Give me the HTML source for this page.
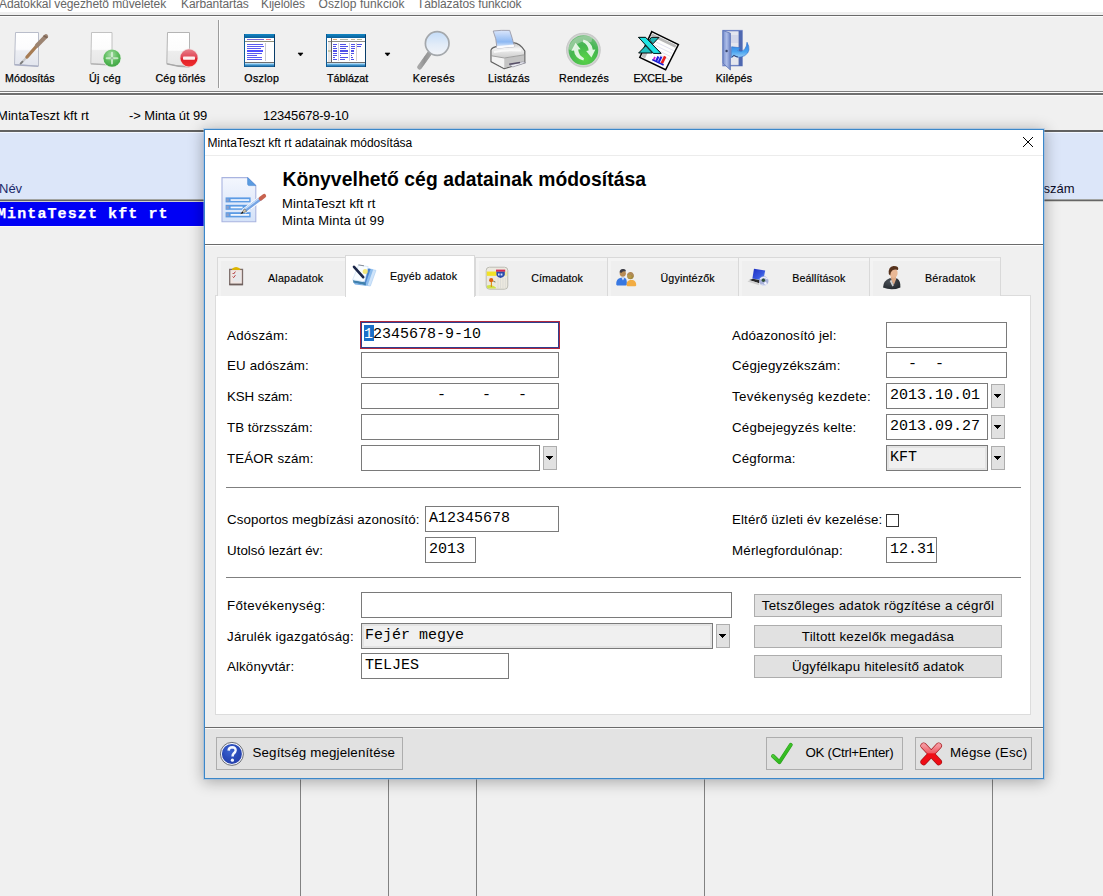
<!DOCTYPE html>
<html lang="hu">
<head>
<meta charset="utf-8">
<title>MintaTeszt kft rt adatainak módosítása</title>
<style>
*{box-sizing:border-box;margin:0;padding:0}
html,body{width:1103px;height:896px;overflow:hidden;background:#f0f0f0}
body{position:relative;font-family:"Liberation Sans",sans-serif;color:#000}
.abs{position:absolute}
.t{position:absolute;white-space:pre;line-height:1}
/* menu */
#menu{left:0;top:0;width:1103px;height:12px;background:#fff;overflow:hidden}
#menu .t{font-size:12px;color:#666;top:-2.5px;letter-spacing:-.08px}
/* toolbar */
.tl{font-size:10.67px;top:73px;color:#000;text-align:center;-webkit-text-stroke:.25px #000}
/* grid */
#ghead{left:0;top:130px;width:1103px;height:72px;background:#dce6f9;border-top:2px solid #626262;box-shadow:inset 0 1px 0 #f4f8ff}
#grow{left:0;top:202px;width:300px;height:24px;background:#0000f5;overflow:hidden}
#grow .t{font-family:"Liberation Mono",monospace;font-weight:bold;font-size:15px;color:#fff;left:-3px;top:4.5px;letter-spacing:1.1px;-webkit-text-stroke:.25px #fff}
.vl{position:absolute;top:225px;width:1px;height:671px;background:#828282}
/* dialog */
#dlg{left:204px;top:129px;width:840px;height:650px;background:#f0f0f0;border:1px solid #3b87c9;box-shadow:0 0 0 1px rgba(140,185,230,.45),0 2px 14px 1px rgba(0,0,0,.30)}
#dlg .in{position:absolute;left:-205px;top:-130px;width:1103px;height:896px}
#title{left:205px;top:130px;width:838px;height:25px;background:#fff}
#hdr{left:205px;top:155px;width:838px;height:89px;background:#fff;border-top:1px solid #ececec}
.lab{font-size:13.33px}
.inp{position:absolute;background:#fff;border:1px solid #7a7a7a;height:26px}
.inp .t,.mono{font-family:"Liberation Mono",monospace;font-size:15px}
.inp .t{left:3px;top:4px}
.gray{background:#f0f0f0;box-shadow:inset 0 0 0 2px #e3e3e3}
.dd{position:absolute;width:14px;height:24px;background:#e1e1e1;border:1px solid #adadad}
.dd:after{content:"";position:absolute;left:2px;top:9px;width:1px;height:1px;background:#000;box-shadow:1px 0px 0 0 #000,2px 0px 0 0 #000,3px 0px 0 0 #000,4px 0px 0 0 #000,5px 0px 0 0 #000,6px 0px 0 0 #000,1px 1px 0 0 #000,2px 1px 0 0 #000,3px 1px 0 0 #000,4px 1px 0 0 #000,5px 1px 0 0 #000,2px 2px 0 0 #000,3px 2px 0 0 #000,4px 2px 0 0 #000,3px 3px 0 0 #000}
.btn{position:absolute;background:#e1e1e1;border:1px solid #adadad;font-size:13.33px;text-align:center;white-space:pre}
.tab{position:absolute;top:257px;height:39px;border:1px solid #d9d9d9;border-bottom:none;background:#efefef;box-shadow:inset 0 3px 0 #f4f4f4,inset 3px 0 0 #f3f3f3}
.tabt{font-size:10.67px;-webkit-text-stroke:.15px #000}
</style>
</head>
<body>
<!-- MENU -->
<div id="menu" class="abs">
<span class="t" style="left:-1px">Adatokkal végezhető műveletek</span>
<span class="t" style="left:181px">Karbantartás</span>
<span class="t" style="left:261px">Kijelölés</span>
<span class="t" style="left:318.5px;letter-spacing:.1px">Oszlop funkciók</span>
<span class="t" style="left:417px">Táblázatos funkciók</span>
</div>
<!-- TOOLBAR frame -->
<div class="abs" style="left:0;top:15px;width:1103px;height:1px;background:#6a6a6a"></div>
<div class="abs" style="left:0;top:16px;width:1103px;height:1px;background:#fdfdfd"></div>
<div class="abs" style="left:0;top:91px;width:1103px;height:1px;background:#808080"></div>
<div class="abs" style="left:0;top:92px;width:1103px;height:1px;background:#fdfdfd"></div>
<div class="abs" style="left:0;top:93px;width:1103px;height:2px;background:#707070"></div>
<div class="abs" style="left:0;top:95px;width:1103px;height:1px;background:#fdfdfd"></div>
<div class="abs" style="left:218px;top:20px;width:1px;height:68px;background:#9c9c9c"></div>
<div class="abs" style="left:219px;top:20px;width:1px;height:68px;background:#fcfcfc"></div>
<!--TBI-START--><svg class="abs" style="left:0;top:17px" width="1103" height="74" viewBox="0 17 1103 74">
<defs>
<linearGradient id="pg" x1="0" y1="0" x2="0" y2="1"><stop offset="0" stop-color="#ffffff"/><stop offset=".5" stop-color="#fbfbfd"/><stop offset=".55" stop-color="#eceef3"/><stop offset="1" stop-color="#e2e5ee"/></linearGradient>
<linearGradient id="pg2" x1="0" y1="0" x2="0" y2="1"><stop offset="0" stop-color="#ffffff"/><stop offset=".52" stop-color="#fcfcfc"/><stop offset=".56" stop-color="#ededed"/><stop offset="1" stop-color="#e6e6e6"/></linearGradient>
<radialGradient id="gr" cx=".45" cy=".3" r=".8"><stop offset="0" stop-color="#a6dca6"/><stop offset=".5" stop-color="#5cbc5c"/><stop offset="1" stop-color="#379e3c"/></radialGradient>
<linearGradient id="rd" x1="0" y1="0" x2="0" y2="1"><stop offset="0" stop-color="#e8808a"/><stop offset=".5" stop-color="#e04050"/><stop offset=".55" stop-color="#e02028"/><stop offset="1" stop-color="#f03030"/></linearGradient>
<linearGradient id="wt" x1="0" y1="0" x2="0" y2="1"><stop offset="0" stop-color="#1387c4"/><stop offset="1" stop-color="#0a5f9a"/></linearGradient>
<linearGradient id="wb" x1="0" y1="0" x2="0" y2="1"><stop offset="0" stop-color="#d8f0ff"/><stop offset=".45" stop-color="#4aa0d8"/><stop offset="1" stop-color="#0a4f86"/></linearGradient>
<linearGradient id="ln" x1="0" y1="0" x2="0" y2="1"><stop offset="0" stop-color="#c4dcf8"/><stop offset=".55" stop-color="#e2ecf8"/><stop offset="1" stop-color="#f2f4f8"/></linearGradient>
<linearGradient id="hd" x1="0" y1="0" x2="1" y2="0"><stop offset="0" stop-color="#b8b8b8"/><stop offset=".5" stop-color="#8c8c8c"/><stop offset="1" stop-color="#a4a4a4"/></linearGradient>
<linearGradient id="pp" x1="0" y1="0" x2="0" y2="1"><stop offset="0" stop-color="#dbe6fb"/><stop offset=".65" stop-color="#8db8f2"/><stop offset=".85" stop-color="#c8dcf8"/><stop offset="1" stop-color="#ffffff"/></linearGradient>
<linearGradient id="pb" x1="0" y1="0" x2="0" y2="1"><stop offset="0" stop-color="#c8c8c8"/><stop offset=".35" stop-color="#f2f2f2"/><stop offset="1" stop-color="#cfcfcf"/></linearGradient>
<linearGradient id="pb2" x1="0" y1="0" x2="1" y2="0"><stop offset="0" stop-color="#f4f4f4"/><stop offset=".6" stop-color="#e0e0e0"/><stop offset="1" stop-color="#c4c4c4"/></linearGradient>
<radialGradient id="rf" cx=".55" cy=".8" r=".95"><stop offset="0" stop-color="#5ad446"/><stop offset=".5" stop-color="#44b650"/><stop offset="1" stop-color="#86c490"/></radialGradient>
<linearGradient id="dr" x1="0" y1="0" x2="1" y2="0"><stop offset="0" stop-color="#7a90ce"/><stop offset=".5" stop-color="#adbde8"/><stop offset="1" stop-color="#6c82c4"/></linearGradient>
<linearGradient id="ar" x1="0" y1="0" x2="0" y2="1"><stop offset="0" stop-color="#2a7be0"/><stop offset=".6" stop-color="#4aa4f0"/><stop offset="1" stop-color="#9cd0f8"/></linearGradient>
<filter id="b3" x="-40%" y="-40%" width="180%" height="180%"><feGaussianBlur stdDeviation=".35"/></filter>
<filter id="b5" x="-40%" y="-40%" width="180%" height="180%"><feGaussianBlur stdDeviation=".55"/></filter>
</defs>
<!-- 1 Módosítás -->
<g filter="url(#b3)">
<path d="M15.5 32.5H38.5V66L14.5 64.5Z" fill="url(#pg)" stroke="#b9bdca" stroke-width="1"/>
<path d="M14.5 64.8L38.3 66.4" stroke="#a9aec4" stroke-width="1.4" fill="none"/>
<path d="M21 63.2L27 57" stroke="#c9c9c9" stroke-width="2.2" stroke-linecap="round"/>
<path d="M20.6 63.6L22.5 61.6" stroke="#7c7c7c" stroke-width="1.8" stroke-linecap="round"/>
<path d="M27 57L37.5 45" stroke="#a67c55" stroke-width="3.4" stroke-linecap="round"/>
<path d="M37 45.5L46 36.2" stroke="#9c8472" stroke-width="4.2" stroke-linecap="round"/>
<path d="M44 36L47 37.5" stroke="#7d6555" stroke-width="1.6" stroke-linecap="round"/>
</g>
<!-- 2 Új cég -->
<g filter="url(#b3)">
<path d="M91.5 32.5H112V64.8L90.8 63.6Z" fill="url(#pg2)" stroke="#c2c2c2" stroke-width="1"/>
<path d="M90.8 63.9L112 65.2" stroke="#b0b0b0" stroke-width="1.3"/>
<circle cx="112" cy="58.2" r="9.3" fill="#e4efe4" opacity=".9"/>
<circle cx="112" cy="58.2" r="8.6" fill="url(#gr)"/>
<path d="M112 52.8V63.6M106.6 58.2H117.4" stroke="#dff5df" stroke-width="2" stroke-linecap="round" opacity=".75"/>
<circle cx="112" cy="58.2" r="1.3" fill="#9cc0a0"/>
</g>
<!-- 3 Cég törlés -->
<g filter="url(#b3)">
<path d="M167.5 32.5H189.5V66.5Q178 66.8 166.8 63.6Z" fill="url(#pg2)" stroke="#b4b4b4" stroke-width="1"/>
<path d="M166.8 63.9Q178 67 189.5 66.8" stroke="#a8a8a8" stroke-width="1.3" fill="none"/>
<circle cx="189" cy="57.9" r="9.4" fill="#f0dada" opacity=".9"/>
<circle cx="189" cy="57.9" r="8.6" fill="url(#rd)"/>
<rect x="183" y="56.4" width="12" height="3.4" rx=".8" fill="#fdeeee"/>
</g>
<!-- 4 Oszlop -->
<g shape-rendering="crispEdges">
<rect x="244" y="34" width="31" height="33" fill="#0d5c96"/>
<rect x="245" y="34" width="29" height="4" fill="url(#wt)"/>
<rect x="245" y="38" width="29" height="25" fill="#fff"/>
<rect x="245" y="63" width="29" height="4" fill="url(#wb)"/>
<rect x="274" y="35" width="1" height="32" fill="#083d6a"/>
<rect x="245" y="41" width="29" height="1" fill="#8e8e78"/>
<rect x="245" y="62" width="29" height="1" fill="#6e6e6e"/>
<rect x="247" y="39" width="17" height="1" fill="#7a6ad8"/>
<rect x="266" y="39" width="5" height="1" fill="#f07a88"/>
<rect x="265" y="43" width="1" height="18" fill="#c8c8d0"/>
<g fill="#5a5af0">
<rect x="247" y="44" width="16" height="1"/><rect x="247" y="46" width="17" height="1"/><rect x="247" y="48" width="14" height="1"/>
<rect x="247" y="50" width="16" height="2" fill="#5050ff"/>
<rect x="247" y="53" width="15" height="1"/><rect x="247" y="55" width="10" height="1"/><rect x="247" y="57" width="15" height="1"/><rect x="247" y="59" width="15" height="1"/>
</g>
</g>
<path d="M298 53h5l-2.5 3z" fill="#000" stroke="#000" stroke-width=".6"/>
<!-- 5 Táblázat -->
<g shape-rendering="crispEdges">
<rect x="326" y="34" width="40" height="33" fill="#0d5c96"/>
<rect x="327" y="34" width="38" height="4" fill="url(#wt)"/>
<rect x="327" y="38" width="38" height="25" fill="#fff"/>
<rect x="327" y="63" width="38" height="4" fill="url(#wb)"/>
<rect x="365" y="35" width="1" height="32" fill="#083d6a"/>
<rect x="328" y="41" width="37" height="1" fill="#8e8e88"/>
<rect x="327" y="62" width="38" height="1" fill="#6e6e6e"/>
<rect x="331" y="38" width="1" height="24" fill="#606060"/>
<rect x="328" y="42" width="3" height="20" fill="#e8e8e8"/>
<rect x="328" y="50" width="3" height="2" fill="#c8c8a8"/>
<rect x="333" y="39" width="4" height="1" fill="#d8a878"/><rect x="340" y="39" width="8" height="1" fill="#b8b8a8"/><rect x="351" y="39" width="4" height="1" fill="#c8b898"/><rect x="357" y="39" width="5" height="1" fill="#b8b898"/>
<rect x="338" y="43" width="1" height="18" fill="#d0d0e0"/><rect x="349" y="43" width="1" height="18" fill="#d0d0e0"/><rect x="356" y="43" width="1" height="18" fill="#d8d0d0"/>
<g fill="#5050e8">
<rect x="333" y="44" width="4" height="1"/><rect x="340" y="44" width="6" height="1"/><rect x="351" y="44" width="4" height="1"/><rect x="357" y="44" width="5" height="1"/>
<rect x="333" y="46" width="3" height="1"/><rect x="340" y="46" width="8" height="1"/><rect x="351" y="46" width="4" height="1"/><rect x="357" y="46" width="4" height="1"/>
<rect x="333" y="48" width="4" height="1"/><rect x="340" y="48" width="6" height="1"/><rect x="351" y="48" width="4" height="1"/>
<rect x="333" y="50" width="4" height="2"/><rect x="340" y="50" width="8" height="2"/><rect x="351" y="50" width="3" height="2"/>
<rect x="333" y="53" width="4" height="1"/><rect x="340" y="53" width="8" height="1"/><rect x="351" y="53" width="3" height="1"/>
<rect x="333" y="55" width="4" height="1"/><rect x="340" y="55" width="1" height="1"/><rect x="351" y="55" width="1" height="1"/>
<rect x="333" y="57" width="2" height="1"/><rect x="340" y="57" width="8" height="1"/><rect x="351" y="57" width="2" height="1"/>
<rect x="333" y="59" width="4" height="1"/><rect x="340" y="59" width="5" height="1"/><rect x="351" y="59" width="3" height="1"/>
</g>
</g>
<path d="M385 53h5l-2.5 3z" fill="#000" stroke="#000" stroke-width=".6"/>
<!-- 6 Keresés -->
<g filter="url(#b3)">
<path d="M429.3 53.6L419.6 67.2" stroke="url(#hd)" stroke-width="4.6" stroke-linecap="round"/>
<path d="M429.3 53.6L419.6 67.2" stroke="#9a9a9a" stroke-width="4.6" stroke-linecap="round" opacity=".55"/>
<circle cx="437.2" cy="43.5" r="11.8" fill="url(#ln)" stroke="#a4a8ac" stroke-width="1.7"/>
</g>
<!-- 7 Listázás -->
<g filter="url(#b3)">
<path d="M491 50.2Q491.2 48 496 46.6L513 42.6Q520.4 43.4 524.8 51V62.6L504.2 68.7L491 61.6Z" fill="#d9d9d9" stroke="#646464" stroke-width="1.25" stroke-linejoin="round"/>
<path d="M491.8 50.4Q492 48.6 496.4 47.4L513 43.6Q519.6 44.2 524 51.4V54.6L504.4 57.6L491.8 55.6Z" fill="url(#pb)"/>
<path d="M491.8 56L504.4 58.2V68L491.8 61.2Z" fill="#f3f3f3"/>
<path d="M504.4 58.2L524.2 55V62.2L504.4 68Z" fill="#c4c4c4"/>
<path d="M491.6 55.8L504.4 58L524.4 54.8" stroke="#9a9a9a" stroke-width=".9" fill="none"/>
<path d="M494 52Q505 49.4 521 50.6" stroke="#fbfbfb" stroke-width="2" fill="none" opacity=".9"/>
<path d="M493.2 31Q501 30 509.7 30.4Q512.4 38 514.4 46.6L497 48.2Q496.4 38 493.2 31Z" fill="url(#pp)" stroke="#9a9aa8" stroke-width=".9"/>
<path d="M496.6 46.2L514.2 44.6L514.6 46.8L497 48.6Z" fill="#fbfbfd"/>
<path d="M509.6 65L522.8 61.8L525.8 62.8L512.8 67Z" fill="#ececf2" stroke="#8c8c9a" stroke-width=".6"/>
<path d="M509.2 64.2L520 62.6" stroke="#585068" stroke-width="1.5"/>
</g>
<!-- 8 Rendezés -->
<g filter="url(#b5)">
<circle cx="583.4" cy="50.1" r="16.8" fill="#d4d6d4" stroke="#c9cac9" stroke-width="1.2"/>
<circle cx="583.4" cy="50.1" r="14.9" fill="url(#rf)"/>
<path d="M570.6 50Q575 35.6 592 39.6" stroke="#b4d4b8" stroke-width="5.5" fill="none" opacity=".6"/>
<path d="M575.6 42.8L580.6 49.2L578.2 49.6Q578.6 55.6 584 58.2L583.4 60.6Q574.6 58 574 50.4L571.4 50.8Z" fill="#eef8ee" opacity=".92"/>
<path d="M591.4 57.4L586.2 51L588.6 50.6Q588.2 44.6 582.8 42L583.4 39.6Q592.2 42.2 592.8 49.8L595.4 49.4Z" fill="#eef8ee" opacity=".92"/>
</g>
<!-- 9 EXCEL-be -->
<g>
<path d="M651.8 31.6L678.4 44.6L665.6 69.8L639.8 57.4Z" fill="#fdfdfd" stroke="#000" stroke-width="1.5" stroke-linejoin="miter"/>
<path d="M652.2 33.4L676.6 45.2L675.2 47.8L650.8 36Z" fill="#b8b8b8"/>
<path d="M650.6 36.6L644 50L641.4 56.6L645 58.4L654 39Z" fill="#c0c0c0"/>
<g stroke="#d4d4e8" stroke-width=".7"><path d="M655 41.5L673.5 50.5"/><path d="M653.5 44.5L672 53.5"/><path d="M652 47.5L670.5 56.5"/><path d="M650.5 50.5L669 59.5"/></g>
<path d="M654.2 56.4l1.6.8-1.4 3-1.6-.8z" fill="#d020d0"/>
<path d="M657.4 56l2 .9-2.2 4.6-2-.9z" fill="#2020e0"/>
<path d="M660.4 56.2l2 .9-2.6 5.4-2-.9z" fill="#2020e0"/>
<path d="M664 55.8l2.4 1.1-3.4 7-2.4-1.1z" fill="#e82020"/>
<path d="M652.2 59.6L663.6 65" stroke="#1818d0" stroke-width="1.5"/>
<path d="M638.6 37.4H645.6L661 53.4H653.6Z" fill="#20e4e4" stroke="#000" stroke-width="1"/>
<path d="M651.4 37.4H659L653 43.8L649.4 40Z" fill="#22b4b4" stroke="#000" stroke-width=".9"/>
<path d="M638.6 53H652.4L647.4 47.6L645.6 45.8Z" fill="#20c0c0" stroke="#000" stroke-width=".9"/>
<path d="M638.6 37.4H645.6L661 53.4H653.6Z" fill="#20e4e4" stroke="#000" stroke-width=".7"/>
</g>
<!-- 10 Kilépés -->
<g filter="url(#b5)">
<rect x="723" y="30.6" width="19" height="35" fill="#e4e6ee" stroke="#7084c4" stroke-width="1.4"/>
<rect x="730" y="35" width="8.5" height="8" fill="#d4d8ea"/>
<rect x="738.6" y="31" width="3.6" height="35" fill="#5068b0"/>
<path d="M723 30.6L730.4 33.2V70L723 63.2Z" fill="url(#dr)" stroke="#5c74b8" stroke-width=".8"/>
<circle cx="726.6" cy="51" r="1.2" fill="#39456c"/>
<path d="M747 42.2Q752 51 744.8 55.6Q738.4 59 733.6 55.4L731.4 57.8L731.6 46.8L740.6 47.8L737.8 50.6Q741.6 52.6 744.6 49.4Q747 46 747 42.2Z" fill="url(#ar)" stroke="#2c6cc8" stroke-width=".6"/><path d="M732 57.2L734 55.4Q736 56.8 738 57" stroke="#26386c" stroke-width="1.1" fill="none" opacity=".8"/>
</g>
</svg>
<!--TBI-END-->
<!-- toolbar labels -->
<span class="t tl" style="left:5px;letter-spacing:0.06px">Módosítás</span>
<span class="t tl" style="left:89px;letter-spacing:0.3px">Új cég</span>
<span class="t tl" style="left:155.5px;letter-spacing:0.15px">Cég törlés</span>
<span class="t tl" style="left:244.3px;letter-spacing:0.3px">Oszlop</span>
<span class="t tl" style="left:327px;letter-spacing:0.05px">Táblázat</span>
<span class="t tl" style="left:412.8px;letter-spacing:0.45px">Keresés</span>
<span class="t tl" style="left:488px;letter-spacing:0.35px">Listázás</span>
<span class="t tl" style="left:559px;letter-spacing:0.26px">Rendezés</span>
<span class="t tl" style="left:633.4px;letter-spacing:-0.18px">EXCEL-be</span>
<span class="t tl" style="left:715.8px;letter-spacing:0.22px">Kilépés</span>
<!-- info line -->
<span class="t" style="left:-3px;top:109px;font-size:13px;letter-spacing:.06px">MintaTeszt kft rt</span>
<span class="t" style="left:129px;top:109px;font-size:13px;letter-spacing:-.12px">-&gt; Minta út 99</span>
<span class="t" style="left:263px;top:109px;font-size:13px;letter-spacing:-.2px">12345678-9-10</span>
<!-- GRID -->
<div id="ghead" class="abs"></div>
<div class="abs" style="left:0;top:199px;width:1103px;height:1px;background:#a2a4a2"></div>
<div class="abs" style="left:0;top:200px;width:1103px;height:1px;background:#666"></div>
<div class="abs" style="left:0;top:201px;width:1103px;height:1px;background:#cfcfcc"></div>
<span class="t" style="left:-1px;top:182px;font-size:13px;color:#1b2a6b">Név</span>
<span class="t" style="left:1043.5px;top:182px;font-size:13px;color:#0c0c28">szám</span>
<div id="grow" class="abs"><span class="t">MintaTeszt kft rt</span></div>
<div class="abs" style="left:0;top:226px;width:300px;height:1px;background:#fafafa"></div>
<div class="vl" style="left:300px"></div>
<div class="vl" style="left:388px"></div>
<div class="vl" style="left:476px"></div>
<div class="vl" style="left:704px"></div>
<div class="vl" style="left:992px"></div>
<!-- DIALOG -->
<div id="dlg" class="abs"></div>
<div id="title" class="abs"></div>
<span class="t" style="left:207.5px;top:137px;font-size:12px">MintaTeszt kft rt adatainak módosítása</span>
<svg class="abs" style="left:1022px;top:136px" width="12" height="12" viewBox="0 0 12 12"><path d="M1 1L11 11M11 1L1 11" stroke="#000" stroke-width="1" fill="none"/></svg>
<div id="hdr" class="abs"></div>
<div class="abs" style="left:205px;top:244px;width:838px;height:1px;background:#6b6b6b"></div>
<div class="abs" style="left:205px;top:245px;width:838px;height:1px;background:#fff"></div>
<span class="t" style="left:282.4px;top:170px;font-size:19.3px;font-weight:bold;letter-spacing:.07px">Könyvelhető cég adatainak módosítása</span>
<span class="t" style="left:282px;top:197px;font-size:13px;letter-spacing:.15px">MintaTeszt kft rt</span>
<span class="t" style="left:282px;top:214px;font-size:13px;letter-spacing:.15px">Minta Minta út 99</span>


<!-- white panel -->
<div class="abs" style="left:215px;top:295px;width:816px;height:420px;background:#fff;border:1px solid #dcdcdc"></div>
<!-- tabs -->
<div class="tab" style="left:217px;width:129px"></div>
<div class="tab" style="left:475px;width:133px"></div>
<div class="tab" style="left:607px;width:132px"></div>
<div class="tab" style="left:738px;width:132px"></div>
<div class="tab" style="left:869px;width:132px"></div>
<div class="tab" style="left:345px;top:255px;width:130px;height:42px;background:#fff;box-shadow:none"></div>
<span class="t tabt" style="left:268px;top:273px;letter-spacing:.2px">Alapadatok</span>
<span class="t tabt" style="left:390px;top:271px;letter-spacing:.17px">Egyéb adatok</span>
<span class="t tabt" style="left:531.3px;top:273px">Címadatok</span>
<span class="t tabt" style="left:660.5px;top:273px;letter-spacing:.15px">Ügyintézők</span>
<span class="t tabt" style="left:792.3px;top:273px;letter-spacing:.08px">Beállítások</span>
<span class="t tabt" style="left:925px;top:273px;letter-spacing:.22px">Béradatok</span>


<!-- form -->
<span class="t lab" style="left:227px;top:329px;letter-spacing:0.250px">Adószám:</span>
<span class="t lab" style="left:227px;top:359px;letter-spacing:0.182px">EU adószám:</span>
<span class="t lab" style="left:227px;top:390px;letter-spacing:-0.111px">KSH szám:</span>
<span class="t lab" style="left:227px;top:421px;letter-spacing:0.038px">TB törzsszám:</span>
<span class="t lab" style="left:227px;top:452px;letter-spacing:0.127px">TEÁOR szám:</span>
<span class="t lab" style="left:732px;top:329px;letter-spacing:0.135px">Adóazonosító jel:</span>
<span class="t lab" style="left:732px;top:359px;letter-spacing:0.227px">Cégjegyzékszám:</span>
<span class="t lab" style="left:732px;top:390px;letter-spacing:0.365px">Tevékenység kezdete:</span>
<span class="t lab" style="left:732px;top:421px;letter-spacing:0.237px">Cégbejegyzés kelte:</span>
<span class="t lab" style="left:732px;top:452px;letter-spacing:0.156px">Cégforma:</span>
<div class="inp" style="left:360px;top:321px;width:200px;height:28px;border:1px solid #b0283c"><div class="abs" style="left:0;top:0;right:0;bottom:0;border:1px solid #2f3f8f"></div><div class="abs" style="left:3px;top:3px;width:10px;height:16px;background:#1a6fc9"></div><span class="t" style="left:3px;top:5px"><span style="color:#fff">1</span>2345678-9-10</span></div>
<div class="inp " style="left:361px;top:352px;width:198px;height:26px"><span class="t"></span></div>
<div class="inp " style="left:361px;top:383px;width:198px;height:26px"><span class="t">        -    -   -</span></div>
<div class="inp " style="left:361px;top:414px;width:198px;height:26px"><span class="t"></span></div>
<div class="inp " style="left:361px;top:445px;width:179px;height:26px"><span class="t"></span></div>
<div class="dd" style="left:543px;top:446px"></div>
<div class="inp " style="left:886px;top:322px;width:121px;height:26px"><span class="t"></span></div>
<div class="inp " style="left:886px;top:352px;width:121px;height:26px"><span class="t">  -  -</span></div>
<div class="inp " style="left:886px;top:383px;width:102px;height:26px"><span class="t">2013.10.01</span></div>
<div class="dd" style="left:991px;top:384px"></div>
<div class="inp " style="left:886px;top:414px;width:102px;height:26px"><span class="t">2013.09.27</span></div>
<div class="dd" style="left:991px;top:415px"></div>
<div class="inp gray" style="left:886px;top:445px;width:102px;height:26px"><span class="t">KFT</span></div>
<div class="dd" style="left:991px;top:446px"></div>
<div class="abs" style="left:226px;top:487px;width:795px;height:1px;background:#7f7f7f"></div>
<span class="t lab" style="left:227px;top:513px;letter-spacing:0.067px">Csoportos megbízási azonosító:</span>
<span class="t lab" style="left:227px;top:544px;letter-spacing:0.029px">Utolsó lezárt év:</span>
<div class="inp " style="left:425px;top:506px;width:134px;height:26px"><span class="t">A12345678</span></div>
<div class="inp " style="left:425px;top:537px;width:51px;height:26px"><span class="t">2013</span></div>
<span class="t lab" style="left:732px;top:513px;letter-spacing:0.108px">Eltérő üzleti év kezelése:</span>
<span class="t lab" style="left:732px;top:544px;letter-spacing:0.200px">Mérlegfordulónap:</span>
<div class="abs" style="left:886px;top:514px;width:13px;height:13px;background:#fff;border:1px solid #333"></div>
<div class="inp " style="left:886px;top:537px;width:51px;height:26px"><span class="t">12.31</span></div>
<div class="abs" style="left:226px;top:577px;width:795px;height:1px;background:#7f7f7f"></div>
<span class="t lab" style="left:227px;top:599px;letter-spacing:0.321px">Főtevékenység:</span>
<span class="t lab" style="left:227px;top:630px;letter-spacing:0.230px">Járulék igazgatóság:</span>
<span class="t lab" style="left:227px;top:660px;letter-spacing:0.118px">Alkönyvtár:</span>
<div class="inp " style="left:361px;top:592px;width:371px;height:26px"><span class="t"></span></div>
<div class="inp gray" style="left:361px;top:623px;width:352px;height:26px"><span class="t">Fejér megye</span></div>
<div class="dd" style="left:716px;top:624px"></div>
<div class="inp " style="left:361px;top:653px;width:148px;height:26px"><span class="t">TELJES</span></div>
<div class="btn" style="left:754px;top:594px;width:248px;height:23px;line-height:21px;letter-spacing:0.232px">Tetszőleges adatok rögzítése a cégről</div>
<div class="btn" style="left:754px;top:625px;width:248px;height:23px;line-height:21px;letter-spacing:0.229px">Tiltott kezelők megadása</div>
<div class="btn" style="left:754px;top:655px;width:248px;height:23px;line-height:21px;letter-spacing:0.168px">Ügyfélkapu hitelesítő adatok</div>

<!-- footer -->
<div class="abs" style="left:205px;top:727px;width:838px;height:1px;background:#6b6b6b"></div>
<div class="abs" style="left:205px;top:728px;width:838px;height:50px;background:#e3e3e3;border-top:1px solid #fafafa"></div>
<div class="btn" style="left:216px;top:737px;width:187px;height:33px"></div>
<span class="t lab" style="left:252.5px;top:746px;letter-spacing:.15px">Segítség megjelenítése</span>
<div class="btn" style="left:766px;top:737px;width:137px;height:33px"></div>
<span class="t lab" style="left:805.5px;top:746px;letter-spacing:-.29px">OK (Ctrl+Enter)</span>
<div class="btn" style="left:915px;top:737px;width:117px;height:33px"></div>
<span class="t lab" style="left:950px;top:746px;letter-spacing:.23px">Mégse (Esc)</span>
<!--DLI-START--><svg class="abs" style="left:205px;top:156px" width="838" height="622" viewBox="205 156 838 622">
<defs>
<linearGradient id="dpg" x1="0" y1="0" x2="0" y2="1"><stop offset="0" stop-color="#f4f7fe"/><stop offset=".45" stop-color="#e6edfb"/><stop offset="1" stop-color="#d4e2f8"/></linearGradient>
<linearGradient id="pnc" x1="0" y1="0" x2="1" y2="1"><stop offset="0" stop-color="#8fb8ec"/><stop offset="1" stop-color="#5e92dc"/></linearGradient>
<radialGradient id="hp" cx=".4" cy=".35" r=".8"><stop offset="0" stop-color="#3a62d0"/><stop offset=".6" stop-color="#2746b4"/><stop offset="1" stop-color="#2a3ea8"/></radialGradient>
<linearGradient id="ck" x1="0" y1="0" x2="1" y2="1"><stop offset="0" stop-color="#66d850"/><stop offset=".6" stop-color="#34bc22"/><stop offset="1" stop-color="#2ba51c"/></linearGradient>
<linearGradient id="rx" x1="0" y1="0" x2="0" y2="1"><stop offset="0" stop-color="#f4959c"/><stop offset=".42" stop-color="#f05a64"/><stop offset=".5" stop-color="#f01018"/><stop offset="1" stop-color="#ee0a12"/></linearGradient>
<linearGradient id="scr" x1="0" y1="0" x2="1" y2="1"><stop offset="0" stop-color="#2030c0"/><stop offset=".6" stop-color="#3858e0"/><stop offset="1" stop-color="#78a8f4"/></linearGradient>
<radialGradient id="su" cx=".4" cy=".3" r=".9"><stop offset="0" stop-color="#4a5058"/><stop offset="1" stop-color="#1c2024"/></radialGradient>
<filter id="c3" x="-40%" y="-40%" width="180%" height="180%"><feGaussianBlur stdDeviation=".35"/></filter>
<filter id="c5" x="-40%" y="-40%" width="180%" height="180%"><feGaussianBlur stdDeviation=".5"/></filter>
</defs>
<!-- header doc icon -->
<g filter="url(#c3)">
<path d="M222 177.6H247.6L255.8 185.6V221.8H222Z" fill="url(#dpg)" stroke="#a9b4e0" stroke-width="1.1"/>
<path d="M247.6 177.6L255.8 185.6H249Q247.6 185.4 247.6 184Z" fill="#5a9be0" stroke="#4c8ad4" stroke-width=".6"/>
<g fill="#5b9be4"><rect x="225.6" y="197.4" width="25" height="5"/><rect x="225.6" y="204.8" width="25" height="5"/><rect x="225.6" y="212.2" width="25" height="5.2"/></g>
<g fill="#f2f7fe"><rect x="230.6" y="199.2" width="18.6" height="1.7"/><rect x="230.6" y="206.6" width="12" height="1.7"/><rect x="230.6" y="214" width="18.6" height="1.8"/></g>
<g fill="#8f9fc8"><rect x="226.4" y="198.6" width="2.4" height="2.8"/><rect x="226.4" y="206" width="2.4" height="2.8"/><rect x="226.4" y="213.4" width="2.4" height="2.8"/></g>
<path d="M243.6 211.4L261.6 197.8" stroke="#ffffff" stroke-width="5.4" stroke-linecap="butt"/>
<path d="M243.8 211.2L261.4 198" stroke="url(#pnc)" stroke-width="3.6"/>
<path d="M244.6 209.2L262 196.2" stroke="#c8e0fa" stroke-width="1.1"/>
<path d="M260.6 198.6L264.2 195.9" stroke="#c86450" stroke-width="3.9" stroke-linecap="round"/>
<path d="M240.6 213.8L244.8 208.8L246.6 211.4Z" fill="#d8c8a8" stroke="#555" stroke-width=".5"/>
<path d="M240.6 213.8L242.6 211.6L243.2 213Z" fill="#111"/>
</g>
<!-- tab icon 1 clipboard -->
<g filter="url(#c3)">
<rect x="229.7" y="269.4" width="12.8" height="15.2" fill="#f1e6e2" stroke="#7d6d6a" stroke-width="1.3"/>
<rect x="229.4" y="283.6" width="13.4" height="1.6" fill="#6d5f5c"/>
<rect x="233.2" y="272" width="7.6" height="9.6" fill="#e4e8ee" opacity=".8"/>
<path d="M232 268.8Q236 265 240.2 268.8V270H232Z" fill="#dcb400"/>
<path d="M232.6 273l1 1 1.8-2.4M232.6 276.6l1 1 1.8-2.4" stroke="#b02a2a" stroke-width=".9" fill="none"/>
</g>
<!-- tab icon 2 notes -->
<g filter="url(#c3)">
<path d="M369 268.6L376 270.4L370.4 286L364.4 284.4Z" fill="#cfe4fa" stroke="#9cc4ee" stroke-width=".5"/>
<path d="M368 268.4L373.2 269.6L367.6 285.4L363.6 284Z" fill="#8cbcec"/>
<path d="M367.4 268.4L370.6 269L365.4 284.6L362.6 283.4Z" fill="#4a82cc"/>
<path d="M352.8 280L365 282.2L366.2 285.4L353.6 283Z" fill="#3f80ac"/>
<path d="M353.6 282.6L366 285.2L370 286.2L355 284.4Z" fill="#78aee6"/>
<path d="M358.6 265L368.2 266.6L364.6 281.8L352.6 279.8Z" fill="#f8fcff" stroke="#c4dcf4" stroke-width=".6"/>
<circle cx="365.2" cy="271.4" r="2.5" fill="#f2e46c" opacity=".9"/>
<path d="M354 266.8L363.2 277.2" stroke="#1a2848" stroke-width="2.6" stroke-linecap="round"/>
<path d="M358.4 264.9L364 265.8" stroke="#70747c" stroke-width=".8"/>
</g>
<!-- tab icon 3 map -->
<g filter="url(#c5)">
<rect x="486.2" y="267.2" width="21.6" height="22" rx="3.2" fill="#ece9df" stroke="#bdbdb4" stroke-width="1"/>
<rect x="486.8" y="271.6" width="20.4" height="4.2" fill="#efe58c" opacity=".75"/>
<rect x="486.8" y="271.6" width="9.6" height="4.2" fill="#f2e228"/>
<path d="M498 278V288.6M500.5 278V288.6M503 278V288.6M505.4 278V288.6" stroke="#d9d9d4" stroke-width=".7"/>
<rect x="496" y="269.6" width="9.2" height="2.2" fill="#d42c50"/>
<path d="M496.4 271.8H504.8V275Q503.6 277.6 500.6 278Q497.4 277.6 496.4 275Z" fill="#2c4cac"/>
<path d="M498 273.4h1.6v2.2H498zM500.6 273.4h1.8v2.2h-1.8z" fill="#d4e0ff"/>
<path d="M487 285.6Q492 283.6 496 287.6L495.6 288.6H488.6Q487 288.4 487 287Z" fill="#cfe248"/>
<circle cx="491.2" cy="280.2" r="2.1" fill="#e0600e"/>
<path d="M491.4 282V287" stroke="#d89018" stroke-width="1.1"/>
<path d="M493.4 281.4L495.4 282" stroke="#687858" stroke-width="1"/>
</g>
<!-- tab icon 4 users -->
<g filter="url(#c5)">
<path d="M616.2 284.6Q616 278.6 621 277.8H624.6Q627.2 278.4 626.8 285L625.8 285.6H617Z" fill="#3878e2"/>
<path d="M621.6 278l1.4 2.6 1.4-2.6z" fill="#cfdcf8"/>
<circle cx="622.8" cy="273.6" r="3.1" fill="#b88c54"/>
<path d="M619.6 272.6Q619.6 268.6 623.4 269Q626.2 269.4 625.8 271.6Q623 270.8 621.6 272.8Z" fill="#3c3c44"/>
<path d="M626.6 285.6Q626.2 280.8 630 280H633Q636.4 281 636.2 285.6L635.4 286.2H627.4Z" fill="#f2ac42"/>
<circle cx="630.4" cy="276" r="3.2" fill="#a48a3e"/>
<path d="M627 275.6Q627.4 271.6 631 272Q634.2 272.6 633.8 277.4Q632.4 274.6 629 274.4Z" fill="#b08a58"/>
<circle cx="629.6" cy="276.6" r="2" fill="#b89848"/>
</g>
<!-- tab icon 5 settings -->
<g filter="url(#c5)">
<path d="M754 268.8L765.2 270.6L763.2 280.4L752.4 278.6Z" fill="url(#scr)"/>
<path d="M749.2 280L753 278.8L760 280.2L759 283.2Z" fill="#2c2c2c"/>
<path d="M747.4 281.6L749.4 280.2L759.2 283.2L759 285.2Z" fill="#cfcfcf"/>
<circle cx="763.8" cy="281" r="4.7" fill="#aab2da"/>
<path d="M760 279Q763.8 275.6 767.6 279" stroke="#eef0fa" stroke-width="1.2" fill="none"/>
<path d="M761.4 284.6Q764 286.4 767 284.2" stroke="#e4e8f8" stroke-width="1" fill="none"/>
<circle cx="763.4" cy="280.2" r="1.7" fill="#2e5034"/>
<circle cx="765.4" cy="283.2" r="1.2" fill="#f4f6ff"/>
</g>
<!-- tab icon 6 person -->
<g filter="url(#c5)">
<path d="M883 287.6Q883.4 280.4 889.6 278.2L897.2 278.6Q900.8 281 900.4 287.4Q892 291.2 883 287.6Z" fill="url(#su)"/>
<path d="M890.6 276.4H896V279.6L893.8 285L891.6 280.6Z" fill="#dca884"/>
<path d="M891.4 279.8L893.8 285.6L892.4 286.6L889.8 281Z" fill="#f0f0f0" opacity=".8"/>
<ellipse cx="893.6" cy="273" rx="4" ry="5" fill="#e9b896"/>
<path d="M888.8 274Q888 266.4 893.6 266Q899.4 266.2 898 270Q895 268.6 892.2 270.6Q890.4 272 890.2 275.4Z" fill="#56301a"/>
</g>
<!-- footer help -->
<g filter="url(#c3)">
<circle cx="231.9" cy="753.9" r="11.5" fill="#f4f6fc" stroke="#5c6068" stroke-width=".9"/>
<circle cx="231.9" cy="753.9" r="10" fill="url(#hp)"/>
<path d="M228.6 750.6Q228.8 747.2 232.2 747.2Q235.8 747.4 235.6 750.4Q235.4 752.2 233.6 753.6Q232.6 754.6 232.6 756.4" stroke="#f2f6ff" stroke-width="2.5" fill="none" stroke-linecap="butt"/>
<circle cx="232.4" cy="760.2" r="1.6" fill="#f2f6ff"/>
</g>
<!-- footer check -->
<g filter="url(#c3)">
<path d="M773 756L779.4 762.2L790.8 744.8" stroke="#2da01e" stroke-width="3.9" fill="none" stroke-linecap="round" stroke-linejoin="round"/>
<path d="M773 756L779.4 762.2L790.8 744.8" stroke="url(#ck)" stroke-width="2.7" fill="none" stroke-linecap="round" stroke-linejoin="round"/>
</g>
<!-- footer X -->
<g filter="url(#c3)">
<path d="M923.6 745.8L938.8 762M938.8 745.8L923.6 762" stroke="#a4161c" stroke-width="6.4" stroke-linecap="round"/>
<path d="M923.6 745.8L938.8 762M938.8 745.8L923.6 762" stroke="url(#rx)" stroke-width="5.2" stroke-linecap="round"/>
</g>
</svg>
<!--DLI-END-->

</body>
</html>
